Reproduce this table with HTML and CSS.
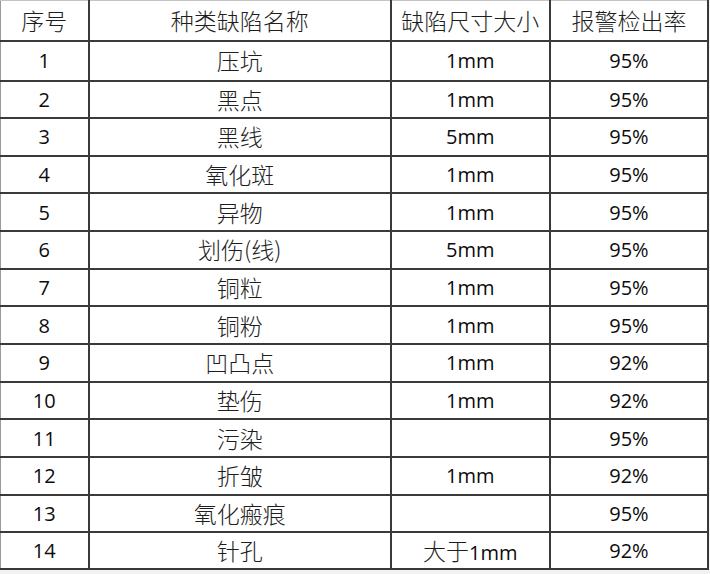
FILE: index.html
```html
<!DOCTYPE html>
<html lang="zh">
<head>
<meta charset="utf-8">
<title>缺陷检出率</title>
<link rel="stylesheet" href="styles.css">
</head>
<body>
<table class="grid">
  <colgroup>
    <col class="c1"><col class="c2"><col class="c3"><col class="c4">
  </colgroup>
  <tr class="hd">
    <th><span class="zh">序号</span></th>
    <th><span class="zh">种类缺陷名称</span></th>
    <th><span class="zh">缺陷尺寸大小</span></th>
    <th><span class="zh">报警检出率</span></th>
  </tr>
  <tr class="first"><td>1</td><td><span class="zh">压坑</span></td><td>1mm</td><td>95%</td></tr>
  <tr><td>2</td><td><span class="zh">黑点</span></td><td>1mm</td><td>95%</td></tr>
  <tr><td>3</td><td><span class="zh">黑线</span></td><td>5mm</td><td>95%</td></tr>
  <tr><td>4</td><td><span class="zh">氧化斑</span></td><td>1mm</td><td>95%</td></tr>
  <tr><td>5</td><td><span class="zh">异物</span></td><td>1mm</td><td>95%</td></tr>
  <tr><td>6</td><td><span class="zh">划伤(线)</span></td><td>5mm</td><td>95%</td></tr>
  <tr><td>7</td><td><span class="zh">铜粒</span></td><td>1mm</td><td>95%</td></tr>
  <tr><td>8</td><td><span class="zh">铜粉</span></td><td>1mm</td><td>95%</td></tr>
  <tr><td>9</td><td><span class="zh">凹凸点</span></td><td>1mm</td><td>92%</td></tr>
  <tr><td>10</td><td><span class="zh">垫伤</span></td><td>1mm</td><td>92%</td></tr>
  <tr><td>11</td><td><span class="zh">污染</span></td><td></td><td>95%</td></tr>
  <tr><td>12</td><td><span class="zh">折皱</span></td><td>1mm</td><td>92%</td></tr>
  <tr><td>13</td><td><span class="zh">氧化瘢痕</span></td><td></td><td>95%</td></tr>
  <tr class="last"><td>14</td><td><span class="zh">针孔</span></td><td><span class="zh">大于</span>1mm</td><td>92%</td></tr>
</table>
</body>
</html>
```

FILE: styles.css
```css
html, body {
  margin: 0;
  padding: 0;
  background: #f2f2f2;
}

.grid {
  border-collapse: collapse;
  table-layout: fixed;
  width: 709px;
  background: #ffffff;
  color: #0c0c0c;
  font-family: "Open Sans", "Noto Sans CJK SC", sans-serif;
  font-size: 20px;
  border-top: 1px solid #c4c4c4;
  border-left: 1px solid #9a9a9a;
}

.c1 { width: 88px; }
.c2 { width: 302px; }
.c3 { width: 159px; }
.c4 { width: 158px; }

.grid th,
.grid td {
  border: 2px solid #3a3a3a;
  padding: 1px 0 0;
  text-align: center;
  vertical-align: middle;
  font-weight: 400;
  line-height: 1;
}

.grid tr { height: 37.67px; }
.grid tr.hd { height: 40px; }
.grid tr.first { height: 40px; }
.grid tr.last { height: 37px; }

.grid tr.hd th { border-top: 1px solid #c4c4c4; }
.grid th:first-child,
.grid td:first-child { border-left: 1px solid #9a9a9a; }

.zh {
  font-family: "Noto Sans CJK SC", sans-serif;
  font-size: 23px;
  font-weight: 300;
  color: #1e1e1e;
}
```
